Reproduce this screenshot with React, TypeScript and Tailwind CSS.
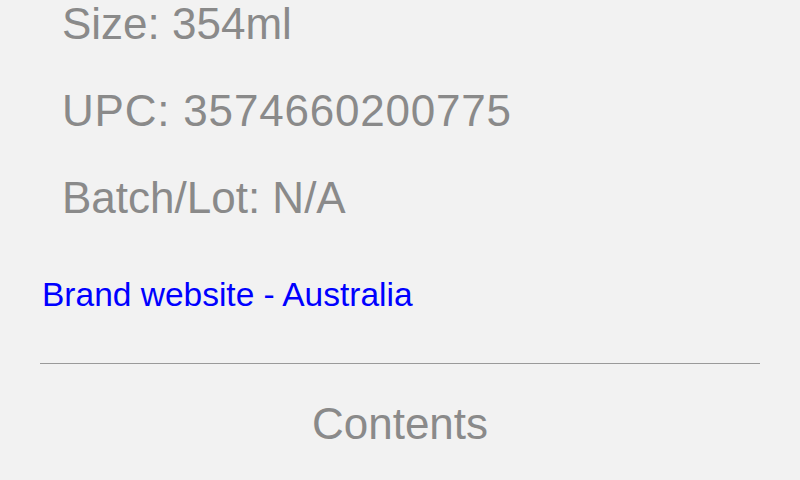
export default function App() {
  const rows = [
    { text: "Size: 354ml", track: "" },
    { text: "UPC: 3574660200775", track: "tracking-[0.8px]" },
    { text: "Batch/Lot: N/A", track: "" },
  ];
  return (
    <div
      className="w-[800px] h-[480px] overflow-hidden bg-[#f2f2f2]"
      style={{ fontFamily: '"Liberation Sans", Arial, sans-serif' }}
    >
      <div className="-mt-[20px] px-[62px] flex flex-col">
        {rows.map((r) => (
          <div key={r.text} className={`h-[87px] flex items-center text-[44px] text-[#8a8a8a] ${r.track}`}>
            {r.text}
          </div>
        ))}
      </div>
      <div className="px-[42px] mt-[35px] text-[33.5px] text-[#0000ff] leading-[38px]">
        Brand website - Australia
      </div>
      <div className="mx-[40px] mt-[49px] border-t border-[#9a9a9a]" />
      <div className="mt-[34px] text-center text-[44px] text-[#8a8a8a] leading-[52px]">Contents</div>
    </div>
  );
}
